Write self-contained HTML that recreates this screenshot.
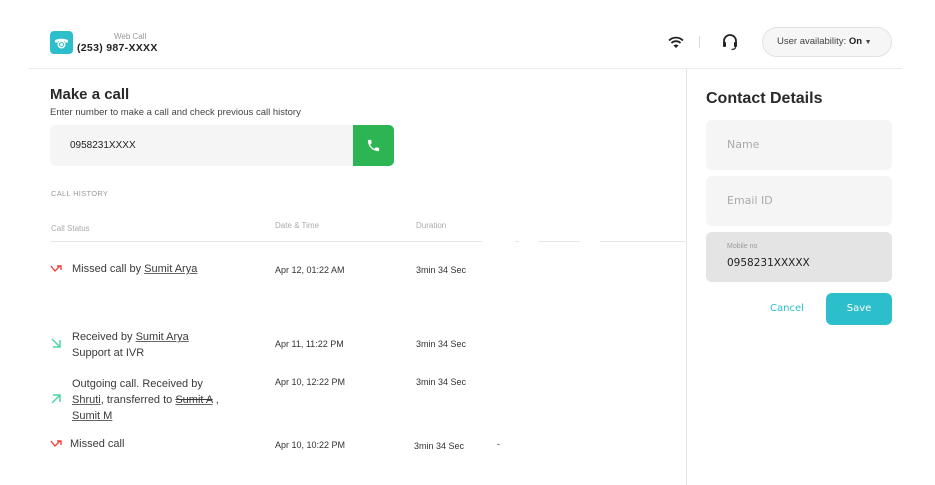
<!DOCTYPE html>
<html><head><meta charset="utf-8"><style>
*{margin:0;padding:0;box-sizing:border-box}
body{width:935px;height:485px;background:#fff;font-family:"Liberation Sans","DejaVu Sans",sans-serif;color:#333;position:relative;overflow:hidden}
.a{position:absolute;white-space:nowrap}
u{text-decoration:underline;text-decoration-color:#666}
.f{position:absolute;left:706px;width:186px;height:50px;border-radius:6px;background:#f5f5f5;color:#aaa;font-size:11px;padding-left:21px;line-height:50px;font-family:"DejaVu Sans",sans-serif}
.t{font-size:11px;color:#3a3a3a}
.s{font-size:9px;color:#333}
</style></head><body>
<div class="a" style="left:28px;top:68px;width:874px;height:1px;background:#ececec"></div>
<div class="a" style="left:686px;top:69px;width:1px;height:416px;background:#e6e6e6"></div>
<div class="a" style="left:50px;top:241px;width:432px;height:1px;background:#e6e6e6"></div>
<div class="a" style="left:515px;top:241px;width:4px;height:1px;background:#e6e6e6"></div>
<div class="a" style="left:538px;top:241px;width:42px;height:1px;background:#e6e6e6"></div>
<div class="a" style="left:600px;top:241px;width:86px;height:1px;background:#e6e6e6"></div>

<div class="a" style="left:50px;top:31px;width:23px;height:23px;border-radius:4px;background:#2cbfcb">
<svg width="23" height="23" viewBox="0 0 23 23"><path d="M5 10c0-3 13-3 13 0v1.5h-3V10H8v1.5H5z" fill="#fff"/><circle cx="11.5" cy="13.5" r="4" fill="#fff"/><circle cx="11.5" cy="13.5" r="2" fill="none" stroke="#2cbfcb" stroke-width="1"/></svg></div>
<div class="a" style="left:114px;top:32px;font-size:8px;color:#999">Web Call</div>
<div class="a" style="left:77px;top:42px;font-size:10.5px;color:#222;font-weight:bold;letter-spacing:.3px">(253) 987-XXXX</div>

<svg class="a" style="left:668px;top:36px" width="16" height="13" viewBox="0 0 16 13"><path d="M1 4.5a10 10 0 0 1 14 0M3.5 7a6.5 6.5 0 0 1 9 0" fill="none" stroke="#222" stroke-width="1.8"/><path d="M5.5 9.5a3.5 3.5 0 0 1 5 0L8 12z" fill="#222"/></svg>
<div class="a" style="left:699px;top:36px;width:1px;height:12px;background:#ddd"></div>
<svg class="a" style="left:721px;top:33px" width="18" height="18" viewBox="0 0 18 18"><path d="M3 11V8a6 6 0 0 1 12 0v3" fill="none" stroke="#222" stroke-width="1.8"/><rect x="2" y="9" width="3" height="5" rx="1" fill="#222"/><rect x="13" y="9" width="3" height="5" rx="1" fill="#222"/><path d="M14.5 14c0 2-2 2.5-4 2.5" fill="none" stroke="#222" stroke-width="1.2"/></svg>
<div class="a" style="left:762px;top:27px;width:130px;height:30px;border:1px solid #e2e2e2;border-radius:15px;background:#f6f6f6;font-size:9.5px;color:#444;line-height:28px;padding-left:14px">User availability: <b style="color:#222">On</b> <span style="font-size:7px">▼</span></div>

<div class="a" style="left:50px;top:86px;font-size:15px;font-weight:bold;color:#2a2a2a">Make a call</div>
<div class="a" style="left:50px;top:107px;font-size:9.5px;color:#444">Enter number to make a call and check previous call history</div>
<div class="a" style="left:50px;top:125px;width:304px;height:41px;background:#f5f5f5;border-radius:6px 0 0 6px"></div>
<div class="a" style="left:70px;top:140px;font-size:10px;color:#222">0958231XXXX</div>
<div class="a" style="left:353px;top:125px;width:41px;height:41px;background:#2db553;border-radius:0 5px 5px 0">
<svg style="position:absolute;left:13px;top:13px" width="15" height="15" viewBox="0 0 24 24"><path fill="#fff" d="M6.6 10.8c1.4 2.8 3.8 5.1 6.6 6.6l2.2-2.2c.3-.3.7-.4 1-.2 1.1.4 2.3.6 3.6.6.6 0 1 .4 1 1V20c0 .6-.4 1-1 1C10.6 21 3 13.4 3 4c0-.6.4-1 1-1h3.5c.6 0 1 .4 1 1 0 1.3.2 2.5.6 3.6.1.3 0 .7-.2 1z"/></svg></div>

<div class="a" style="left:51px;top:189px;font-size:7.5px;color:#999;letter-spacing:.3px">CALL HISTORY</div>
<div class="a" style="left:51px;top:224px;font-size:8px;color:#aaa">Call Status</div>
<div class="a" style="left:275px;top:221px;font-size:8px;color:#aaa">Date &amp; Time</div>
<div class="a" style="left:416px;top:221px;font-size:8px;color:#aaa">Duration</div>

<svg class="a" style="left:50px;top:265px" width="12" height="8" viewBox="0 0 12 8"><path d="M1 1l4 5 5-5M7 1h4v4" fill="none" stroke="#f0403c" stroke-width="1.4"/></svg>
<div class="a t" style="left:72px;top:263px">Missed call by <u>Sumit Arya</u></div>
<div class="a s" style="left:275px;top:265px">Apr 12, 01:22 AM</div>
<div class="a s" style="left:416px;top:265px">3min 34 Sec</div>

<svg class="a" style="left:51px;top:338px" width="11" height="11" viewBox="0 0 11 11"><path d="M1 1l8 8M9 2v7H2" fill="none" stroke="#4fd6a0" stroke-width="1.5"/></svg>
<div class="a t" style="left:72px;top:329px;line-height:16px">Received by <u>Sumit Arya </u><br>Support at IVR</div>
<div class="a s" style="left:275px;top:339px">Apr 11, 11:22 PM</div>
<div class="a s" style="left:416px;top:339px">3min 34 Sec</div>

<svg class="a" style="left:51px;top:393px" width="11" height="11" viewBox="0 0 11 11"><path d="M1 10l8-8M2 2h7v7" fill="none" stroke="#4fd6a0" stroke-width="1.5"/></svg>
<div class="a t" style="left:72px;top:376px;line-height:16px">Outgoing call. Received by<br><u>Shruti</u>, transferred to <s><u>Sumit A</u></s> ,<br><u>Sumit M</u></div>
<div class="a s" style="left:275px;top:377px">Apr 10, 12:22 PM</div>
<div class="a s" style="left:416px;top:377px">3min 34 Sec</div>

<svg class="a" style="left:50px;top:440px" width="12" height="8" viewBox="0 0 12 8"><path d="M1 1l4 5 5-5M7 1h4v4" fill="none" stroke="#f0403c" stroke-width="1.4"/></svg>
<div class="a t" style="left:70px;top:438px">Missed call</div>
<div class="a s" style="left:275px;top:440px">Apr 10, 10:22 PM</div>
<div class="a s" style="left:414px;top:441px">3min 34 Sec</div>
<div class="a s" style="left:497px;top:439px">-</div>

<div class="a" style="left:706px;top:90px;font-size:16px;font-weight:bold;color:#2a2a2a">Contact Details</div>
<div class="f" style="top:120px">Name</div>
<div class="f" style="top:176px">Email ID</div>
<div class="a" style="left:706px;top:232px;width:186px;height:50px;border-radius:6px;background:#e4e4e4"></div>
<div class="a" style="left:727px;top:243px;font-size:7px;color:#999">Mobile no</div>
<div class="a" style="left:727px;top:257px;font-size:10.5px;color:#222;font-family:'DejaVu Sans',sans-serif">0958231XXXXX</div>
<div class="a" style="left:770px;top:303px;font-size:10px;color:#2cbfcb;font-family:'DejaVu Sans',sans-serif">Cancel</div>
<div class="a" style="left:826px;top:293px;width:66px;height:32px;border-radius:6px;background:#2cbfcb;color:#fff;font-size:10px;text-align:center;line-height:32px;font-family:'DejaVu Sans',sans-serif">Save</div>
</body></html>
